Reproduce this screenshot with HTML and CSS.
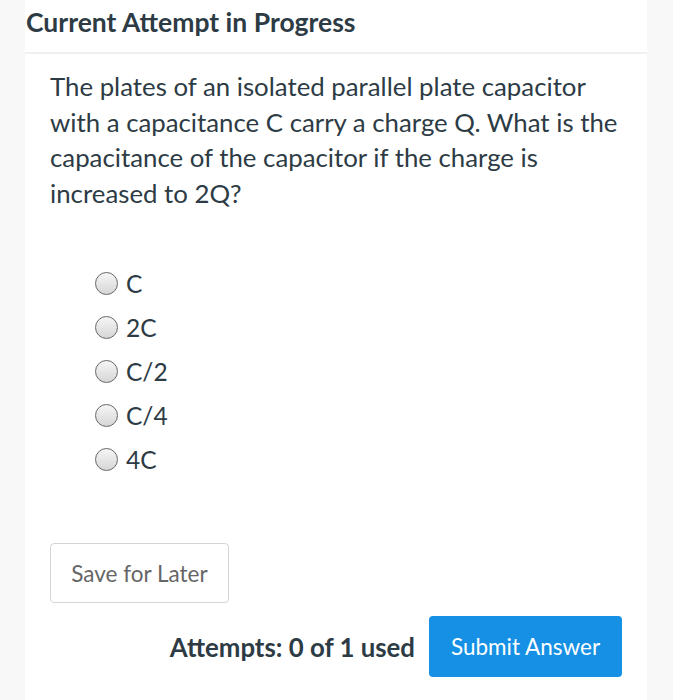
FILE: index.html
```html
<!DOCTYPE html>
<html>
<head>
<meta charset="utf-8">
<link rel="stylesheet" href="styles.css">
</head>
<body>
<div class="panel">
  <div class="header">Current Attempt in Progress</div>
  <div class="content">
    <p class="question">The plates of an isolated parallel plate capacitor with a capacitance C carry a charge Q. What is the capacitance of the capacitor if the charge is increased to 2Q?</p>
    <ul class="options">
      <li><span class="radio"></span><span>C</span></li>
      <li><span class="radio"></span><span>2C</span></li>
      <li><span class="radio"></span><span>C/2</span></li>
      <li><span class="radio"></span><span>C/4</span></li>
      <li><span class="radio"></span><span>4C</span></li>
    </ul>
    <button class="save">Save for Later</button>
    <div class="footer">
      <span class="attempts">Attempts: 0 of 1 used</span>
      <button class="submit">Submit Answer</button>
    </div>
  </div>
</div>
</body>
</html>
```
FILE: styles.css
```css
html, body {
  margin: 0;
  padding: 0;
  background: #f8f8f8;
  font-family: Lato, "Liberation Sans", sans-serif;
  color: #2d3b45;
}
.panel {
  margin-left: 25px;
  width: 622px;
  height: 700px;
  background: #fff;
}
.header {
  height: 54px;
  box-sizing: border-box;
  padding: 5px 0 0 1px;
  font-size: 26.5px;
  font-weight: 700;
  line-height: 34px;
  border-bottom: 2px solid #f0f0f0;
}
.content {
  padding: 0 0 0 25px;
}
.question {
  margin: 15px 0 0 0;
  font-size: 25.8px;
  line-height: 35.5px;
  width: 572px;
}
.options {
  list-style: none;
  margin: 50px 0 0 45px;
  padding: 0;
}
.options li {
  display: flex;
  align-items: center;
  height: 44px;
  font-size: 24.5px;
}
.radio {
  width: 21px;
  height: 21px;
  border: 1.5px solid #666;
  border-radius: 50%;
  background: linear-gradient(#f6f6f6, #d6d6d6);
  margin-right: 8px;
  flex: none;
}
.save {
  display: block;
  margin-top: 62px;
  width: 179px;
  height: 60px;
  border: 1px solid #d5d5d5;
  border-radius: 4px;
  background: #fff;
  font-family: Lato, "Liberation Sans", sans-serif;
  font-size: 22.5px;
  color: #666;
}
.footer {
  display: flex;
  justify-content: flex-end;
  align-items: center;
  gap: 14px;
  margin-top: 13px;
  padding-right: 25px;
}
.attempts {
  font-size: 25.8px;
  font-weight: 700;
}
.submit {
  width: 193px;
  height: 61px;
  border: none;
  border-radius: 4px;
  background: #1590e4;
  color: #fff;
  font-family: Lato, "Liberation Sans", sans-serif;
  font-size: 22.5px;
}
```
